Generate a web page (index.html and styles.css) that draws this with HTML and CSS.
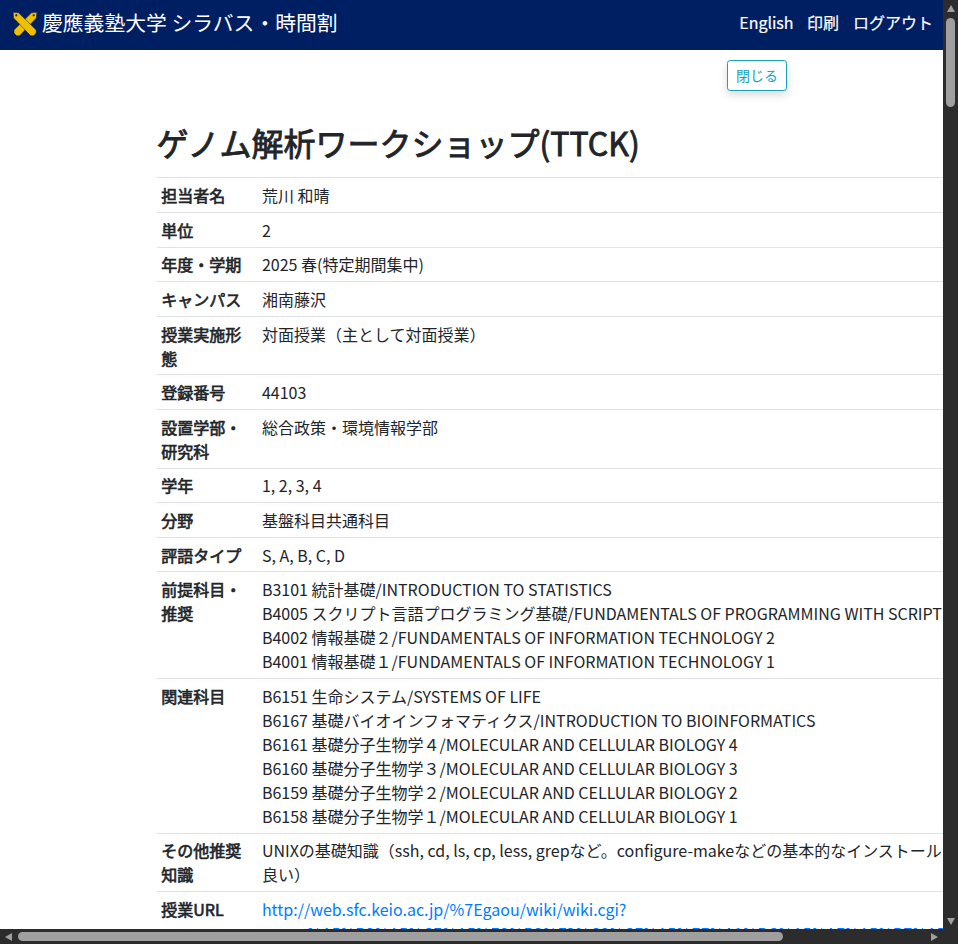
FILE: index.html
```html
<!DOCTYPE html>
<html lang="ja">
<head>
<meta charset="utf-8">
<title>ゲノム解析ワークショップ(TTCK)</title>
<link rel="stylesheet" href="styles.css">
</head>
<body>
<div class="window">
<div class="page">
  <header class="navbar">
    <a class="brand">
      <svg class="logo" viewBox="0 0 24 24" width="24" height="24">
        <g fill="#f0c000" stroke="#001e62" stroke-width=".5">
          <path d="M23.800 .3 18.500 .8 1 18v3l2.500 2.800h3L23.400 6z"/>
          <path d="M.2 .3 5.500 .8 23.200 18v3l-2.500 2.800h-3L.6 6z"/>
        </g>
        <g fill="#001e62"><circle cx="3.300" cy="3.300" r="1.100"/><circle cx="20.700" cy="3.300" r="1.100"/></g>
      </svg>
      <span>慶應義塾大学 シラバス・時間割</span>
    </a>
    <nav class="links"><a>English</a><a>印刷</a><a>ログアウト</a></nav>
  </header>
  <main class="content">
    <div class="actions"><button class="close">閉じる</button></div>
    <h2>ゲノム解析ワークショップ(TTCK)</h2>
    <dl class="table">
      <div class="row"><dt>担当者名</dt><dd>荒川 和晴</dd></div>
      <div class="row"><dt>単位</dt><dd>2</dd></div>
      <div class="row"><dt>年度・学期</dt><dd>2025 春(特定期間集中)</dd></div>
      <div class="row"><dt>キャンパス</dt><dd>湘南藤沢</dd></div>
      <div class="row"><dt>授業実施形態</dt><dd>対面授業（主として対面授業）</dd></div>
      <div class="row"><dt>登録番号</dt><dd>44103</dd></div>
      <div class="row"><dt>設置学部・研究科</dt><dd>総合政策・環境情報学部</dd></div>
      <div class="row"><dt>学年</dt><dd>1, 2, 3, 4</dd></div>
      <div class="row"><dt>分野</dt><dd>基盤科目共通科目</dd></div>
      <div class="row"><dt>評語タイプ</dt><dd>S, A, B, C, D</dd></div>
      <div class="row"><dt>前提科目・推奨</dt><dd>B3101 統計基礎/INTRODUCTION TO STATISTICS<br>B4005 スクリプト言語プログラミング基礎/FUNDAMENTALS OF PROGRAMMING WITH SCRIPT<br>B4002 情報基礎２/FUNDAMENTALS OF INFORMATION TECHNOLOGY 2<br>B4001 情報基礎１/FUNDAMENTALS OF INFORMATION TECHNOLOGY 1</dd></div>
      <div class="row"><dt>関連科目</dt><dd>B6151 生命システム/SYSTEMS OF LIFE<br>B6167 基礎バイオインフォマティクス/INTRODUCTION TO BIOINFORMATICS<br>B6161 基礎分子生物学４/MOLECULAR AND CELLULAR BIOLOGY 4<br>B6160 基礎分子生物学３/MOLECULAR AND CELLULAR BIOLOGY 3<br>B6159 基礎分子生物学２/MOLECULAR AND CELLULAR BIOLOGY 2<br>B6158 基礎分子生物学１/MOLECULAR AND CELLULAR BIOLOGY 1</dd></div>
      <div class="row"><dt>その他推奨知識</dt><dd>UNIXの基礎知識（ssh, cd, ls, cp, less, grepなど。configure-makeなどの基本的なインストール<br>良い）</dd></div>
      <div class="row"><dt>授業URL</dt><dd><a class="url">http://web.sfc.keio.ac.jp/%7Egaou/wiki/wiki.cgi?<br>page=%A5%B2%A5%CE%A5%E0%B2%F2%C0%CF%A5%EF%A1%BC%A5%AF%A5%B7%A5%E7%A5%C3%A5%D7</a></dd></div>
    </dl>
  </main>
</div>
<div class="vbar"><i class="up"></i><i class="vthumb"></i><i class="down"></i></div>
<div class="hbar"><i class="left"></i><i class="hthumb"></i><i class="right"></i></div>
</div>
</body>
</html>
```

FILE: styles.css
```css
* { box-sizing: border-box; }
body {
  margin: 0;
  overflow: hidden;
  font: 400 16px/24px "Noto Sans CJK JP", sans-serif;
  color: #212529;
  background: #fff;
}
.window {
  display: grid;
  grid-template-columns: 943px 15px;
  grid-template-rows: 929px 15px;
  width: 958px;
  height: 944px;
  background: #2c2c2c;
}
.page { overflow: hidden; background: #fff; }
.navbar {
  display: flex;
  align-items: center;
  justify-content: space-between;
  height: 50px;
  padding: 0 10px 6px 13px;
  background: #001e62;
  color: #fff;
}
.brand { display: flex; align-items: center; gap: 5px; font-size: 20.8px; white-space: nowrap; }
.logo { position: relative; top: 2px; }
.links { display: flex; gap: 14px; -webkit-text-stroke: .2px; white-space: nowrap; }
.links a:first-child { margin-right: -.6px; }
.content { padding: 10px 0 0 156.500px; white-space: nowrap; }
.actions { display: flex; height: 31px; padding-left: 570.500px; }
.close {
  width: 60px;
  height: 31px;
  padding: 0;
  border: 1px solid #17a2b8;
  border-radius: 3.2px;
  background: #fff;
  color: #17a2b8;
  font: 400 14px/21px "Noto Sans CJK JP", sans-serif;
  box-shadow: 0 4px 8px rgba(0, 0, 0, .15);
}
h2 { margin: 32.3px 0 15.720px; font-size: 32px; line-height: 38.4px; font-weight: 400; -webkit-text-stroke: .9px; }
.table { width: 1000px; margin: 0; }
.row { display: flex; border-top: 1px solid #dee2e6; }
dt { flex: 0 0 100.600px; padding: 4.8px; -webkit-text-stroke: .65px; white-space: normal; }
dd { margin: 0; padding: 4.8px; }
.url { color: #007bff; }
.vbar, .hbar { display: flex; align-items: center; background: #2c2c2c; }
.vbar { flex-direction: column; }
.vthumb { width: 9px; height: 89px; margin-top: 6px; border-radius: 5px; background: #9f9f9f; }
.hthumb { width: 765px; height: 9px; margin-left: 6px; border-radius: 5px; background: #9f9f9f; }
.up, .down { border: 4.500px solid transparent; }
.up { margin-top: 5px; border-top: 0; border-bottom: 7px solid #9f9f9f; }
.down { margin: auto 0 4px; border-bottom: 0; border-top: 7px solid #9f9f9f; }
.left, .right { border: 4.500px solid transparent; }
.left { margin-left: 5px; border-left: 0; border-right: 7px solid #9f9f9f; }
.right { margin: 0 5px 0 auto; border-right: 0; border-left: 7px solid #9f9f9f; }
```
